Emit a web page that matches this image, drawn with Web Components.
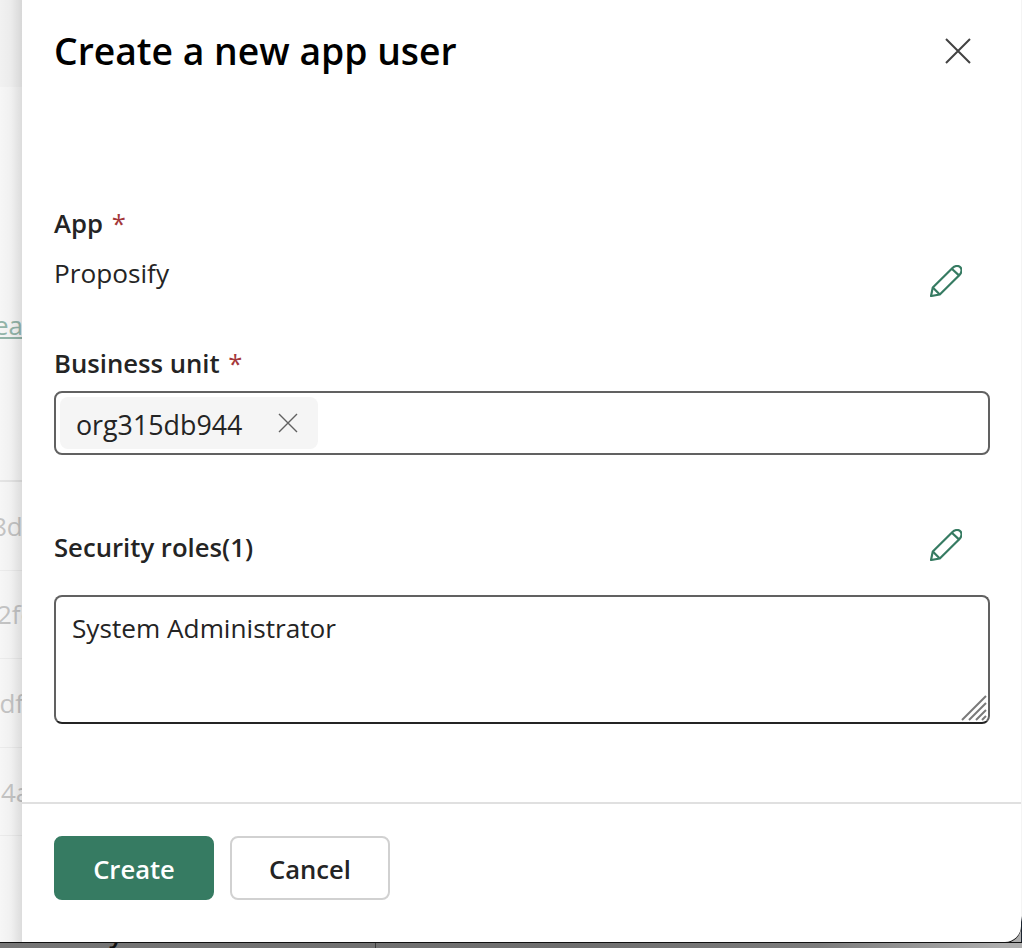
<!DOCTYPE html>
<html lang="en"><head><meta charset="utf-8"><title>Create a new app user</title>
<style>
html,body{margin:0;height:100%;overflow:hidden;background:#fff}
body{font-family:"Open Sans","Noto Sans",sans-serif}
</style></head><body>
<app-screen>
  <side-strip slot="strip"></side-strip>
  <app-panel slot="panel">
    <panel-header slot="header">Create a new app user</panel-header>
    <form-field label="App" required>
      <edit-row>Proposify</edit-row>
    </form-field>
    <form-field label="Business unit" required class="bu">
      <tag-input value="org315db944"></tag-input>
    </form-field>
    <roles-field count="1" value="System Administrator"></roles-field>
    <panel-footer slot="footer"></panel-footer>
  </app-panel>
</app-screen>
<script>
const PENCIL=`<svg width="32" height="32" viewBox="0 0 32 32" fill="none" stroke="#367B62" stroke-width="2.200" stroke-linejoin="round"><path d="M1 31l1.800-8.500L22.500 3c2.500-2.500 6-2.600 7.800-.8s1.700 5.300-.8 7.800L9.800 29.500z"/><path d="M2.800 22.500l7 7M21.800 3.700l7.700 7.200"/></svg>`;
const X=(s,c,w)=>`<svg width="${s}" height="${s}" viewBox="0 0 ${s} ${s}" fill="none" stroke="${c}" stroke-width="${w}"><path d="M1 1L${s-1} ${s-1}M${s-1} 1L1 ${s-1}"/></svg>`;
function def(name,html){customElements.define(name,class extends HTMLElement{connectedCallback(){if(this.shadowRoot)return;const r=this.attachShadow({mode:'open'});r.innerHTML=typeof html==='function'?html(this):html;}})}
def('app-screen',`<style>
:host{display:flex;flex-direction:column;width:1022px;height:948px;overflow:hidden;background:linear-gradient(90deg,#767676 0,#6e6e6e 55%,#7c7c7c 80%,#aeaeae 98%)}
.top{display:flex;height:942px;flex:none}
.edge{width:1px;flex:none;background:linear-gradient(180deg,#f4f4f4 0 916px,#1c2530 922px)}
.tail{flex:1;border-top:1px solid #111;position:relative;overflow:hidden;font:600 26px/30px "Open Sans",sans-serif;color:#111}
.tail span{position:absolute;left:109px;top:-25px;white-space:nowrap}
.tail i{position:absolute;left:375px;top:0;bottom:0;width:1px;background:#3c3c3c}
</style><div class="top"><slot name="strip"></slot><slot name="panel"></slot><div class="edge"></div></div><div class="tail"><span>y</span><i></i></div>`);
def('side-strip',`<style>
:host{display:flex;flex-direction:column;width:22px;flex:none;position:relative;overflow:hidden;background:#f6f6f6;font-size:26px;color:#c4c4c4}
.head{height:87px;flex:none;background:#f1f1f1}
.a{height:395px;flex:none;border-bottom:2px solid #e4e4e4;box-sizing:border-box;position:relative}
.link{position:absolute;left:-6px;top:220px;color:#93b5a9;text-decoration:underline;line-height:36px}
.row{height:88.6px;flex:none;border-bottom:1px solid #ebebeb;box-sizing:border-box;display:flex;align-items:center;white-space:nowrap;line-height:36px}
.row span{margin-left:var(--o)}
.shade{position:absolute;inset:0;background:linear-gradient(90deg,rgba(0,0,0,0) 0,rgba(0,0,0,.025) 50%,rgba(0,0,0,.105) 100%)}
</style><div class="head"></div><div class="a"><span class="link">ea</span></div>
<div class="row" style="--o:-8px"><span>8d</span></div><div class="row" style="--o:-3px"><span>2fe</span></div><div class="row" style="--o:-13px"><span>cdf</span></div><div class="row" style="--o:1px"><span>4a</span></div><div class="shade"></div>`);
def('app-panel',`<style>
:host{display:flex;flex-direction:column;width:999px;flex:none;height:942px;background:#fff;border-bottom-right-radius:16px;box-shadow:0 1px 0 #111;color:#242424;position:relative}
main{flex:1;padding:0 31px 0 32px;display:flex;flex-direction:column}
</style><slot name="header"></slot><main><slot></slot></main><slot name="footer"></slot>`);
def('panel-header',`<style>
:host{display:flex;align-items:center;justify-content:space-between;height:102px;padding:0 50px 0 32px;flex:none;font-size:37.3px;font-weight:600;color:#000;margin-bottom:100px;line-height:1}
</style><slot></slot>${X(26,'#424242',2)}`);
def('form-field',h=>`<style>
:host{display:flex;flex-direction:column;font-size:26.200px;font-weight:400}
.l{font-weight:600;font-size:25.700px;line-height:44px;color:#242424;height:44px}
.s{color:#a4373a;font-weight:400;margin-left:2px}
:host(.bu){margin-top:40px}
:host(.bu) .l{margin-bottom:5px}
</style><div class="l">${h.getAttribute('label')}${h.hasAttribute('required')?'<span class="s"> *</span>':''}</div><slot></slot>`);
def('edit-row',`<style>
:host{display:flex;align-items:center;justify-content:space-between;height:56px;padding-right:28px}
span{position:relative;top:0;margin-bottom:2px}
svg{align-self:flex-end;margin-bottom:5px}
</style><span><slot></slot></span>${PENCIL}`);
def('tag-input',h=>`<style>
:host{display:flex;align-items:center;box-sizing:border-box;height:64px;border:2px solid #616161;border-radius:8px;padding:0 4px}
.t{display:flex;align-items:center;height:52px;background:#f5f5f5;border-radius:8px;padding:0 20px 0 16px;gap:36px;font-size:26.800px}
.v{padding-top:2px}
</style><div class="t"><span class="v">${h.getAttribute('value')}</span>${X(20,'#616161',1.4)}</div>`);
def('roles-field',h=>`<style>
:host{display:flex;flex-direction:column;margin-top:53px;font-size:26.200px}
.l{display:flex;align-items:center;justify-content:space-between;height:80px;font-weight:600;font-size:25.700px;padding-right:28px;margin-bottom:7px}
.l span{margin-bottom:2px}
.l svg{margin-bottom:6px}
.b{position:relative;box-sizing:border-box;height:129px;border:2px solid #616161;border-bottom-color:#242424;border-radius:8px;padding:13px 16px;line-height:36px}
.g{position:absolute;right:0;bottom:0}
</style><div class="l"><span>Security roles(${h.getAttribute('count')})</span>${PENCIL}</div>
<div class="b">${h.getAttribute('value')}<svg class="g" width="28" height="28" viewBox="0 0 28 28" stroke="#7a7a7a" stroke-width="2"><path d="M2 26L26 2M9 26L26 9M16 26L26 16M22 26L26 22"/></svg></div>`);
def('panel-footer',`<style>
:host{display:flex;gap:16px;box-sizing:border-box;height:140px;flex:none;border-top:2px solid #e0e0e0;padding:32px}
button{font:600 25.600px "Open Sans","Noto Sans",sans-serif;height:64px;width:160px;border-radius:8px;box-sizing:border-box;border:2px solid #d1d1d1;background:#fff;color:#242424;padding:2px 0 0}
.p{background:#367B62;border-color:#367B62;color:#fff}
</style><button class="p">Create</button><button>Cancel</button>`);
</script></body></html>
